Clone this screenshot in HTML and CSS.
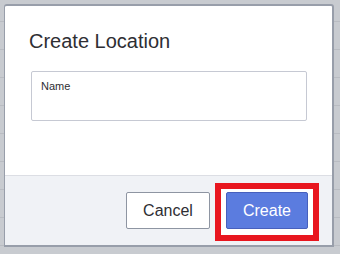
FILE: index.html
```html
<!DOCTYPE html>
<html lang="en">
<head>
    <meta charset="UTF-8">
    <meta name="viewport" content="width=device-width, initial-scale=1.0">
    <title>Create Location</title>
    <link rel="stylesheet" href="styles.css">
</head>
<body>

    <!-- dialog -->
    <div class="dialog">
        <div class="dialog-body">
            <h2 class="dialog-title">Create Location</h2>

            <label class="field">
                <span class="field-label">Name</span>
                <input type="text" class="field-input">
            </label>
        </div>

        <div class="dialog-footer">
            <button class="btn btn-cancel">Cancel</button>
            <span class="highlight">
                <button class="btn btn-create">Create</button>
            </span>
        </div>
    </div>

</body>
</html>
```

FILE: styles.css
```css
body {
    font-family: "Liberation Sans", Arial, sans-serif;
    margin: 0;
    height: 254px;
    overflow: hidden;
    background-color: #c8cbd0;
    background-image: repeating-linear-gradient(to bottom, transparent 0, transparent 21px, #b9bcc2 21px, #b9bcc2 22px, transparent 22px, transparent 28px);
}
.dialog {
    width: 330px;
    height: 243px;
    margin: 4px 0 0 4px;
    border: 2px solid #989eaa;
    border-left-width: 1px;
    border-radius: 3px 3px 0 0;
    background-color: #fff;
    box-sizing: border-box;
    display: flex;
    flex-direction: column;
}
.dialog-body {
    flex: 1;
    padding: 24px 25px 0 24px;
}
.dialog-title {
    margin: 0;
    font-size: 20px;
    font-weight: normal;
    line-height: 23px;
    color: #2e2e33;
}
.field {
    display: block;
    margin: 18px 0 0 2px;
    height: 50px;
    padding: 8px 8px 0 9px;
    border: 1px solid #c6c9d3;
    border-radius: 2px;
    box-sizing: border-box;
}
.field-label {
    display: block;
    font-size: 11px;
    line-height: 13px;
    color: #2e2e33;
}
.field-input {
    width: 100%;
    border: none;
    padding: 0;
    outline: none;
    font-size: 14px;
}
.dialog-footer {
    display: flex;
    justify-content: flex-end;
    align-items: flex-start;
    gap: 16px;
    height: 70px;
    padding: 16px 24px 0 0;
    border-top: 1px solid #dcdee4;
    background-color: #f0f2f6;
    box-sizing: border-box;
}
.btn {
    display: block;
    height: 37px;
    font-family: inherit;
    font-size: 16px;
    border-radius: 2px;
    cursor: pointer;
}
.btn-cancel {
    width: 84px;
    background-color: #fff;
    color: #2e2e33;
    border: 1px solid #8e95a2;
}
.highlight {
    position: relative;
    display: block;
}
.highlight::before {
    content: "";
    position: absolute;
    top: -9px;
    bottom: -12px;
    left: -11px;
    right: -11px;
    border: 6px solid #e8161f;
    background-color: #fff;
}
.btn-create {
    position: relative;
    width: 82px;
    background-color: #5b7cdf;
    color: #fff;
    border: 1px solid #4760bd;
}
```
